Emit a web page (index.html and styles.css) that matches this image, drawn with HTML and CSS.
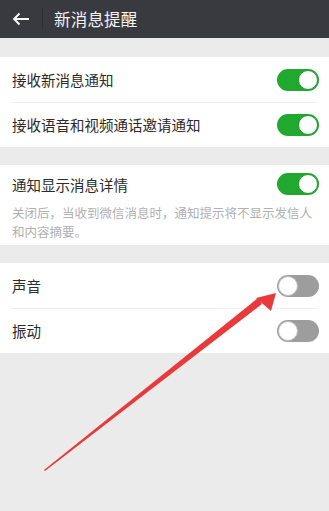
FILE: index.html
```html
<!DOCTYPE html>
<html lang="zh">
<head>
<meta charset="utf-8">
<link rel="stylesheet" href="styles.css">
</head>
<body>
<div class="page">
  <header class="bar">
    <span class="back">
      <svg width="18" height="14" viewBox="0 0 18 14"><path d="M17 7H2M7.5 1.5L2 7l5.5 5.5" fill="none" stroke="#fff" stroke-width="1.8"/></svg>
    </span>
    <span class="sep"></span>
    <span class="title">新消息提醒</span>
  </header>

  <section class="group g1">
    <div class="row"><span class="label">接收新消息通知</span><span class="sw on"></span></div>
    <div class="row"><span class="label">接收语音和视频通话邀请通知</span><span class="sw on"></span></div>
  </section>

  <section class="group g2">
    <div class="row tall"><span class="label">通知显示消息详情</span><span class="sw on"></span></div>
    <p class="desc">关闭后，当收到微信消息时，通知提示将不显示发信人和内容摘要。</p>
  </section>

  <section class="group g3">
    <div class="row"><span class="label">声音</span><span class="sw"></span></div>
    <div class="row"><span class="label">振动</span><span class="sw"></span></div>
  </section>

  <svg class="arrow" width="329" height="511" viewBox="0 0 329 511">
    <polygon points="44,470 45,471 262,304 258,298" fill="#e83a3a"/>
    <polygon points="276,293 256,298 271,311" fill="#e83a3a"/>
  </svg>
</div>
</body>
</html>
```

FILE: styles.css
```css
html, body {
  margin: 0;
  padding: 0;
}
body {
  background: #ebebeb;
  font-family: "Noto Sans CJK SC", "Noto Sans", sans-serif;
}
.page {
  position: relative;
  width: 329px;
  height: 511px;
  overflow: hidden;
}
.bar {
  height: 38px;
  background: #393a3f;
  display: flex;
  align-items: center;
}
.back {
  width: 42px;
  display: flex;
  justify-content: center;
}
.back svg { display: block; margin-left: -1px; }
.sep {
  width: 1px;
  height: 22px;
  background: #2f3034;
}
.title {
  color: #f4f4f4;
  font-size: 16.5px;
  margin-left: 11px;
  letter-spacing: 0.2px;
}
.group {
  background: #fff;
}
.g1 { margin-top: 19px; }
.g2 { margin-top: 18px; }
.g3 { margin-top: 18px; }
.row {
  height: 45px;
  display: flex;
  align-items: center;
  justify-content: space-between;
  padding: 0 10px 0 12px;
  position: relative;
}
.row + .row::before {
  content: "";
  position: absolute;
  top: 0;
  left: 10px;
  right: 12px;
  height: 1px;
  background: #efefef;
}
.row.tall {
  height: 38px;
}
.label {
  font-size: 14.5px;
  color: #2b2b2b;
}
.desc {
  margin: 0;
  padding: 0 12px 4px 12px;
  font-size: 12.5px;
  line-height: 19px;
  color: #b0b0b0;
}
.sw {
  width: 42px;
  height: 22px;
  border-radius: 11px;
  background: #9d9d9d;
  position: relative;
  flex: none;
}
.sw::after {
  content: "";
  position: absolute;
  top: 1px;
  left: 1px;
  width: 18px;
  height: 18px;
  border-radius: 50%;
  background: #fff;
  border: 1px solid #bdbdbd;
}
.sw.on {
  background: #20a82f;
}
.sw.on::after {
  left: auto;
  right: 1px;
  border-color: #1e9a2c;
}
.arrow {
  position: absolute;
  left: 0;
  top: 0;
}
```
